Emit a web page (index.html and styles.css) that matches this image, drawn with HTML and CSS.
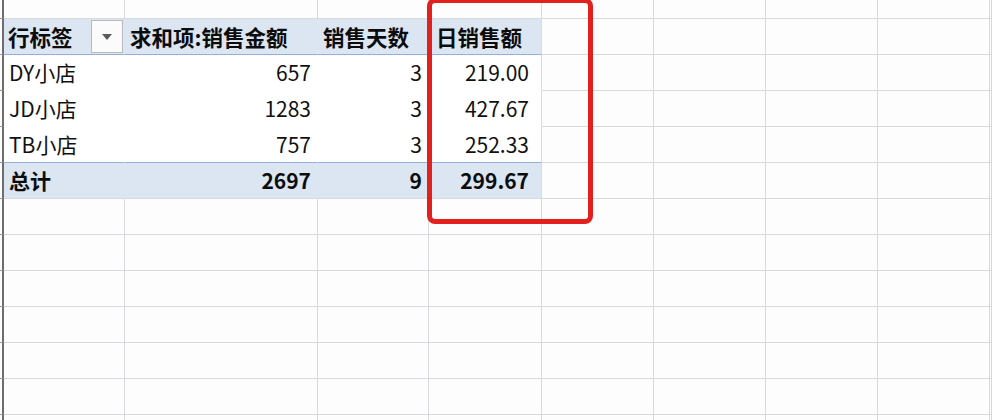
FILE: index.html
```html
<!DOCTYPE html>
<html lang="zh-CN">
<head>
<meta charset="utf-8">
<title>数据透视表</title>
<link rel="stylesheet" href="styles.css">
</head>
<body>
<div class="sheet">
  <div class="row top"><div class="rh"></div><div></div><div></div><div></div><div></div><div></div><div></div><div></div><div></div><div></div></div>
  <div class="row pv-head">
    <div class="rh"></div>
    <div class="pv lbl"><span>行标签</span><span class="dd"><i></i></span></div>
    <div class="pv">求和项:销售金额</div>
    <div class="pv">销售天数</div>
    <div class="pv last">日销售额</div>
    <div></div><div></div><div></div><div></div><div></div>
  </div>
  <div class="row pv-data">
    <div class="rh"></div>
    <div class="pv">DY小店</div>
    <div class="pv num">657</div>
    <div class="pv num">3</div>
    <div class="pv num last dec">219.00</div>
    <div></div><div></div><div></div><div></div><div></div>
  </div>
  <div class="row pv-data">
    <div class="rh"></div>
    <div class="pv">JD小店</div>
    <div class="pv num">1283</div>
    <div class="pv num">3</div>
    <div class="pv num last dec">427.67</div>
    <div></div><div></div><div></div><div></div><div></div>
  </div>
  <div class="row pv-data pv-end">
    <div class="rh"></div>
    <div class="pv">TB小店</div>
    <div class="pv num">757</div>
    <div class="pv num">3</div>
    <div class="pv num last dec">252.33</div>
    <div></div><div></div><div></div><div></div><div></div>
  </div>
  <div class="row pv-total">
    <div class="rh"></div>
    <div class="pv">总计</div>
    <div class="pv num">2697</div>
    <div class="pv num">9</div>
    <div class="pv num last dec">299.67</div>
    <div></div><div></div><div></div><div></div><div></div>
  </div>
  <div class="row"><div class="rh"></div><div></div><div></div><div></div><div></div><div></div><div></div><div></div><div></div><div></div></div>
  <div class="row"><div class="rh"></div><div></div><div></div><div></div><div></div><div></div><div></div><div></div><div></div><div></div></div>
  <div class="row"><div class="rh"></div><div></div><div></div><div></div><div></div><div></div><div></div><div></div><div></div><div></div></div>
  <div class="row"><div class="rh"></div><div></div><div></div><div></div><div></div><div></div><div></div><div></div><div></div><div></div></div>
  <div class="row"><div class="rh"></div><div></div><div></div><div></div><div></div><div></div><div></div><div></div><div></div><div></div></div>
  <div class="row"><div class="rh"></div><div></div><div></div><div></div><div></div><div></div><div></div><div></div><div></div><div></div></div>
  <div class="row"><div class="rh"></div><div></div><div></div><div></div><div></div><div></div><div></div><div></div><div></div><div></div></div>
  <div class="mark"></div>
</div>
</body>
</html>
```

FILE: styles.css
```css
html, body {
  margin: 0;
  padding: 0;
  background: #fdfdfe;
}

body {
  font-family: "Noto Sans CJK SC", "Noto Sans", sans-serif;
  color: #111;
  overflow: hidden;
}

.sheet {
  position: relative;
  width: 992px;
  height: 420px;
  overflow: hidden;
}

.row {
  display: grid;
  grid-template-columns: 4px 121px 193px 111px 113px 112px 112px 112px 112px 1fr;
  height: 36px;
}

.row.top {
  height: 19px;
}

.row > div {
  box-sizing: border-box;
  border-right: 1px solid #d8d9dc;
  border-bottom: 1px solid #d8d9dc;
  min-width: 0;
}

.row > .rh {
  border-right: 2px solid #6d6d70;
  border-bottom-color: #9a9a9c;
}

.pv {
  font-size: 21px;
  line-height: 35px;
  padding: 0 6px 0 5px;
  white-space: nowrap;
}

.num {
  text-align: right;
}

.dec {
  padding-right: 12px;
}

/* header */
.pv-head .pv {
  background: #dce6f2;
  border-right-color: #dce6f2;
  border-bottom: 1px solid #94b0d6;
  font-weight: 700;
  font-size: 21.5px;
  color: #0c0c0c;
}

.pv-head .pv.last {
  border-right-color: #d8d9dc;
  padding-left: 7px;
}

.pv-head .lbl {
  display: flex;
  justify-content: space-between;
  align-items: flex-start;
  padding-right: 1px;
  padding-left: 4px;
}

.dd {
  width: 32px;
  height: 33px;
  margin-top: 1px;
  box-sizing: border-box;
  border: 1px solid #b7b9bd;
  background: #fbfbfc;
  display: flex;
  align-items: center;
  justify-content: center;
}

.dd i {
  width: 0;
  height: 0;
  border-left: 5px solid transparent;
  border-right: 5px solid transparent;
  border-top: 6px solid #5a5a5a;
}

/* data */
.pv-data .pv {
  background: #fff;
  border-right-color: #fff;
  border-bottom-color: #fff;
}

.pv-data .pv.last {
  border-right-color: #d8d9dc;
}

.pv-end .pv {
  border-bottom-color: #94b0d6;
}

/* total */
.pv-total .pv {
  background: #dce6f2;
  border-right-color: #dce6f2;
  font-weight: 700;
  color: #0c0c0c;
}

.pv-total .pv.last {
  border-right-color: #d8d9dc;
}

/* annotation */
.mark {
  position: absolute;
  left: 427px;
  top: -2px;
  width: 166px;
  height: 226px;
  box-sizing: border-box;
  border: 5px solid #e2211f;
  border-radius: 8px;
}
```
